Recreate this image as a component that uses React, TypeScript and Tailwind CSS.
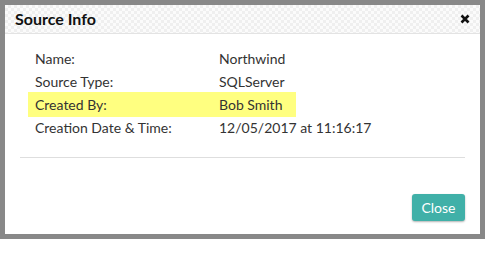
import React from "react";

const rows = [
  { label: "Name:", value: "Northwind" },
  { label: "Source Type:", value: "SQLServer" },
  { label: "Created By:", value: "Bob Smith", hl: true },
  { label: "Creation Date & Time:", value: "12/05/2017 at 11:16:17" },
];

export default function App() {
  return (
    <div className="w-[485px] h-[258px] bg-white" style={{ fontFamily: "Lato, 'Open Sans', sans-serif" }}>
      <div className="w-[485px] h-[239px] border-[5px] border-[#888888] bg-white flex flex-col">
        <div className="h-[29px] border-b border-[#e3e3e3] flex items-center justify-between pl-[10px] pr-[10px] bg-[repeating-conic-gradient(#efefef_0_25%,#fbfbfb_0_50%)] bg-size-[6px_6px]">
          <span className="text-[16px] font-bold text-[#111] leading-none">Source Info</span>
          <svg width="10" height="10" viewBox="0 0 10 10">
            <path d="M1.5 1.5 L8.5 8.5 M8.5 1.5 L1.5 8.5" stroke="#111" strokeWidth="2.6" strokeLinecap="butt" />
          </svg>
        </div>
        <div className="px-[15px] flex flex-col">
          <div className="pt-[13px] pb-[18px] border-b border-[#dedede]">
            <div className="w-[268px] ml-[8px] flex flex-col text-[14px] text-[#333]">
              {rows.map((r) => (
                <div
                  key={r.label}
                  className={
                    "flex items-center h-[23px] pl-[7px] whitespace-nowrap " + (r.hl ? "bg-[#ffff80] h-[25px] -my-px" : "")
                  }
                >
                  <span className="w-[184px] shrink-0">{r.label}</span>
                  <span className="shrink-0">{r.value}</span>
                </div>
              ))}
            </div>
          </div>
          <div className="flex justify-end pt-[36px]">
            <button className="w-[53px] h-[27px] rounded-[3px] bg-[#40b0a8] text-white text-[14px] shadow-[0_1px_2px_rgba(0,0,0,0.3)]">
              Close
            </button>
          </div>
        </div>
      </div>
    </div>
  );
}
